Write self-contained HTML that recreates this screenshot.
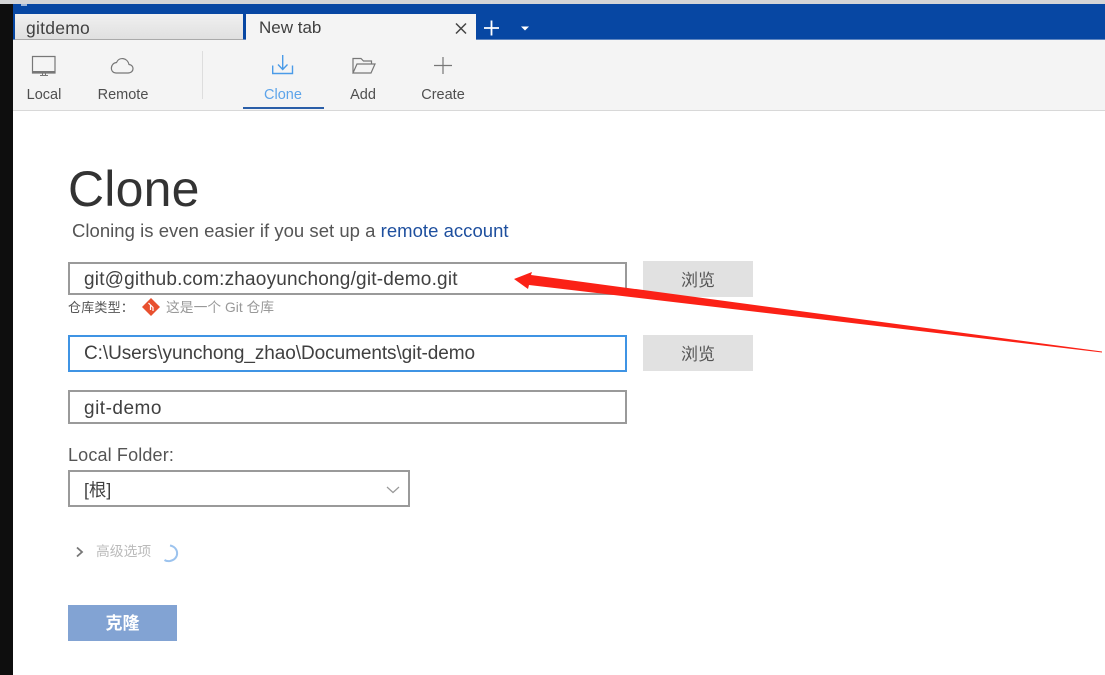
<!DOCTYPE html>
<html><head><meta charset="utf-8">
<style>
html,body{margin:0;padding:0;background:#fff}
body{width:1105px;height:675px;position:relative;overflow:hidden;font-family:"Liberation Sans","Noto Sans CJK SC",sans-serif;color:#444}
.a{position:absolute;white-space:nowrap}
.box{position:absolute;box-sizing:border-box;background:#fff;border:2px solid #9a9a9a;left:68px;width:559px}
.txt{font-size:19px;color:#404040;line-height:24px}
.lbl{font-size:14.500px;color:#4f4f4f;line-height:18px;text-align:center}
.btn{position:absolute;left:643px;width:110px;height:36px;background:#e1e1e1;color:#555;font-size:17px;line-height:40px;text-align:center}
</style></head><body>
<div class="a" style="left:0;top:0;width:1105px;height:4px;background:#d4d5d7"></div>
<div class="a" style="left:0;top:4px;width:13px;height:671px;background:#0e0e0e"></div>
<div class="a" style="left:13px;top:4px;width:1092px;height:36px;background:#0747a3"></div>
<div class="a" style="left:21px;top:4px;width:6px;height:2px;background:#9db6da"></div>
<div class="a" style="left:13px;top:39px;width:1092px;height:1px;background:#5f86c0"></div>
<div class="a" style="left:13px;top:40px;width:1092px;height:70px;background:#f4f4f4;border-bottom:1px solid #d8d8d8"></div>
<div class="a" style="left:15px;top:14px;width:228px;height:26px;background:linear-gradient(#f0f0f0,#e0e0e0);border-bottom:1px solid #aaa;box-sizing:border-box"></div>
<div class="a txt" style="left:26px;top:16px;font-size:17.500px;letter-spacing:.25px">gitdemo</div>
<div class="a" style="left:246px;top:14px;width:230px;height:27px;background:#f4f4f4"></div>
<div class="a txt" style="left:259px;top:16px;font-size:17px">New tab</div>
<svg class="a" style="left:450px;top:14px" width="80" height="28" fill="none">
<path d="M6 9.500L16 19.500M16 9.500L6 19.500" stroke="#444" stroke-width="1.500"/>
<path d="M41.500 6.500V21.500M34 14H49" stroke="#fff" stroke-width="1.800"/>
<path d="M71 12.500H79L75 16.500Z" fill="#fff"/>
</svg>
<svg class="a" style="left:20px;top:48px" width="450" height="40" fill="none" stroke="#777" stroke-width="1.200">
<path d="M12.500 8.500H35V25H12.500Z"/><path d="M12.500 24H35" stroke-width="2"/><path d="M20 27.500H28M22.500 25V27.500M25.500 25V27.500" stroke-width="1"/>
<path d="M96 25H108C114.500 25 114.500 17 109 16.500C107.500 9.500 99 8.500 96.500 14.500C90 15 89.500 25 96 25Z"/>
<path d="M252.700 17.500V25.500H272.500V17.500M262.700 7V21M258 16.500L262.700 21.500L267.500 16.500" stroke="#4a9be8" stroke-width="1.400"/>
<path d="M333 25V10.500H341L343.500 13H351.500V16M333 25H351L355 16H337L333 25Z"/>
<path d="M423 9V26M414 17.500H432"/>
</svg>
<div class="a" style="left:202px;top:51px;width:1px;height:48px;background:#ddd"></div>
<div class="a lbl" style="left:14px;top:86px;width:60px">Local</div>
<div class="a lbl" style="left:88px;top:86px;width:70px">Remote</div>
<div class="a lbl" style="left:243px;top:86px;width:80px;color:#5da4ea">Clone</div>
<div class="a lbl" style="left:333px;top:86px;width:60px">Add</div>
<div class="a lbl" style="left:408px;top:86px;width:70px">Create</div>
<div class="a" style="left:243px;top:107px;width:81px;height:2px;background:#2a5ea8"></div>
<div class="a" style="left:68px;top:160px;font-size:50px;line-height:58px;color:#333;letter-spacing:.2px">Clone</div>
<div class="a" style="left:72px;top:219px;font-size:18.500px;line-height:24px;color:#555;letter-spacing:.03px">Cloning is even easier if you set up a <span style="color:#1e4f9e">remote account</span></div>
<div class="box" style="top:262px;height:33px"></div>
<div class="a txt" style="left:84px;top:268px;letter-spacing:.2px">git@github.com:zhaoyunchong/git-demo.git</div>
<div class="btn" style="top:261px">浏览</div>
<div class="a" style="left:68px;top:299px;font-size:13px;line-height:18px;color:#555;letter-spacing:.2px">仓库类型：</div>
<svg class="a" style="left:141px;top:297px" width="20" height="20"><path d="M10 1L19 10L10 19L1 10Z" fill="#e8502f"/><path d="M7.500 6L12 10.500V14M9.500 8V13" stroke="#fff" stroke-width="1.200" fill="none"/></svg>
<div class="a" style="left:166px;top:299px;font-size:13.800px;line-height:18px;color:#999">这是一个 Git 仓库</div>
<div class="box" style="top:335px;height:37px;border-color:#3f94e4"></div>
<div class="a txt" style="left:84px;top:342px;letter-spacing:-.07px">C:\Users\yunchong_zhao\Documents\git-demo</div>
<div class="btn" style="top:335px">浏览</div>
<div class="box" style="top:390px;height:34px"></div>
<div class="a txt" style="left:84px;top:397px;letter-spacing:.5px">git-demo</div>
<div class="a" style="left:68px;top:444px;font-size:18px;line-height:22px;color:#555;letter-spacing:.15px">Local Folder:</div>
<div class="box" style="top:470px;width:342px;height:37px"></div>
<div class="a txt" style="left:84px;top:478px;font-size:17.500px">[根]</div>
<svg class="a" style="left:385px;top:484px" width="16" height="12" fill="none"><path d="M2 3L8 8.500L14 3" stroke="#999" stroke-width="1.200"/></svg>
<svg class="a" style="left:72px;top:544px" width="112" height="20" fill="none">
<path d="M5 3.500L10 8L5 12.500" stroke="#777" stroke-width="1.800"/>
<path d="M98 1.500C107 3 108 15 98 17C96 17.300 94 17 92.500 16" stroke="#9cc3ee" stroke-width="2"/>
</svg>
<div class="a" style="left:96px;top:543px;font-size:13.800px;line-height:18px;color:#bbb">高级选项</div>
<div class="a" style="left:68px;top:605px;width:109px;height:36px;background:#82a3d3;color:#fff;font-size:17px;font-weight:bold;line-height:38px;text-align:center">克隆</div>
<svg class="a" style="left:0;top:0" width="1105" height="675"><path d="M514 279L532 272L531 275L1102 351.500L1102 352.500L529 285L528 289Z" fill="#fb2116"/></svg>
</body></html>
